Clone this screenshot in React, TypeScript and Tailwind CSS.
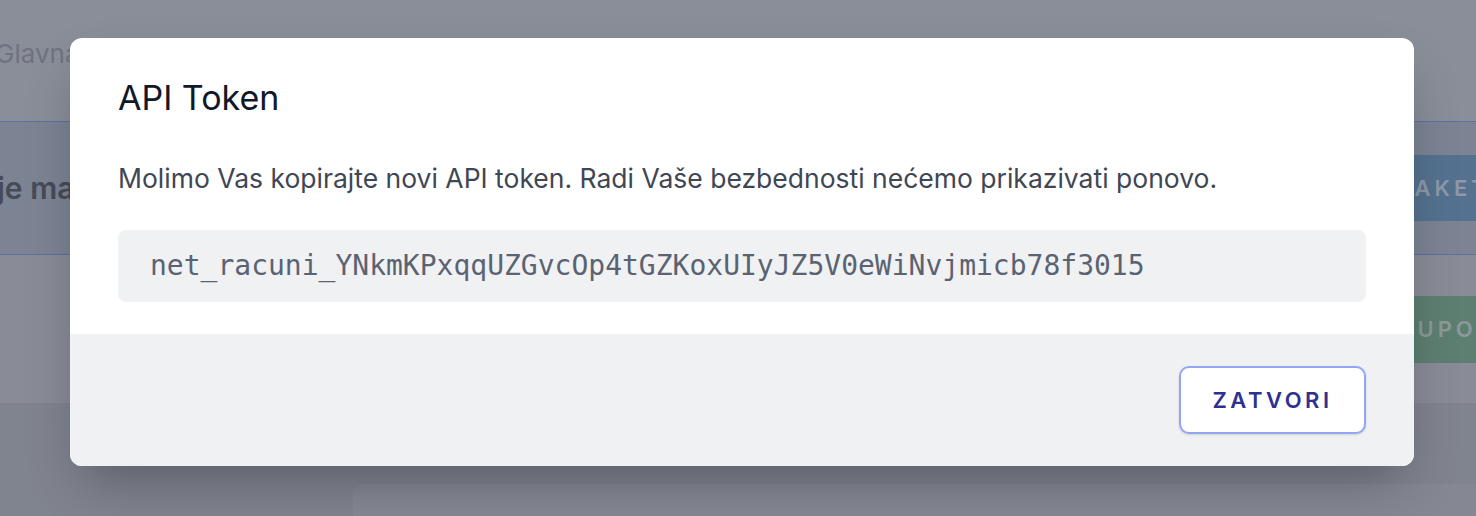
import React from 'react'

const TOKEN = 'net_racuni_YNkmKPxqqUZGvcOp4tGZKoxUIyJZ5V0eWiNvjmicb78f3015'

function BackgroundPage() {
  return (
    <div className="flex h-[516px] w-[1476px] flex-col overflow-hidden bg-[#8a8e99] font-['Inter',sans-serif]">
      <div className="flex h-[121px] shrink-0 items-start pt-[34px]">
        <span className="ml-[-5px] text-[26px] text-[#6e7381]">Glavna</span>
      </div>
      <div className="flex h-[134px] shrink-0 items-center border-y border-[#5a71a0] bg-[#7c8494]">
        <span className="ml-[-3px] text-[30px] font-semibold text-[#464b58]">je ma</span>
        <div className="ml-auto mr-[-84px] flex h-[66px] w-[180px] items-center bg-[#547290] pl-[18px] text-[22px] font-semibold tracking-[4px] text-[#8e98a8]">
          PAKETI
        </div>
      </div>
      <div className="flex h-[148px] shrink-0 items-start bg-[#898c97] pt-[41px]">
        <div className="ml-auto mr-[-84px] flex h-[67px] w-[180px] items-center bg-[#5d7f72] pl-[18px] text-[22px] font-semibold tracking-[4px] text-[#8a9a98]">
          KUPOVINA
        </div>
      </div>
      <div className="flex flex-1 items-start bg-[#80848f] pl-[353px] pt-[81px]">
        <div className="h-[60px] flex-1 rounded-tl-xl bg-[#858893]" />
      </div>
    </div>
  )
}

function TokenModal() {
  return (
    <div className="absolute left-[70px] top-[38px] w-[1344px] overflow-hidden rounded-xl bg-white shadow-[0_25px_50px_-12px_rgba(0,0,0,0.3)] font-['Inter',sans-serif]">
      <div className="px-12 pb-8 pt-10">
        <h2 className="text-[34px] leading-[40px] font-normal text-[#111827]">API Token</h2>
        <p className="mt-[44px] text-[26.5px] leading-[32px] text-[#3f4654]">
          Molimo Vas kopirajte novi API token. Radi Vaše bezbednosti nećemo prikazivati ponovo.
        </p>
        <div className="mt-[36px] flex h-[72px] items-center rounded-lg bg-[#f0f1f3] px-8 font-['DejaVu_Sans_Mono',monospace] text-[28px] text-[#5b6372]">
          {TOKEN}
        </div>
      </div>
      <div className="flex justify-end bg-[#f0f1f3] px-12 py-8">
        <button
          type="button"
          className="flex h-[68px] w-[187px] items-center justify-center rounded-[10px] border-2 border-[#93a6f6] bg-white text-[22px] font-semibold tracking-[3.5px] text-[#2f3190] shadow-sm"
        >
          ZATVORI
        </button>
      </div>
    </div>
  )
}

export default function App() {
  return (
    <div className="relative h-[516px] w-[1476px] overflow-hidden">
      <BackgroundPage />
      <TokenModal />
    </div>
  )
}
